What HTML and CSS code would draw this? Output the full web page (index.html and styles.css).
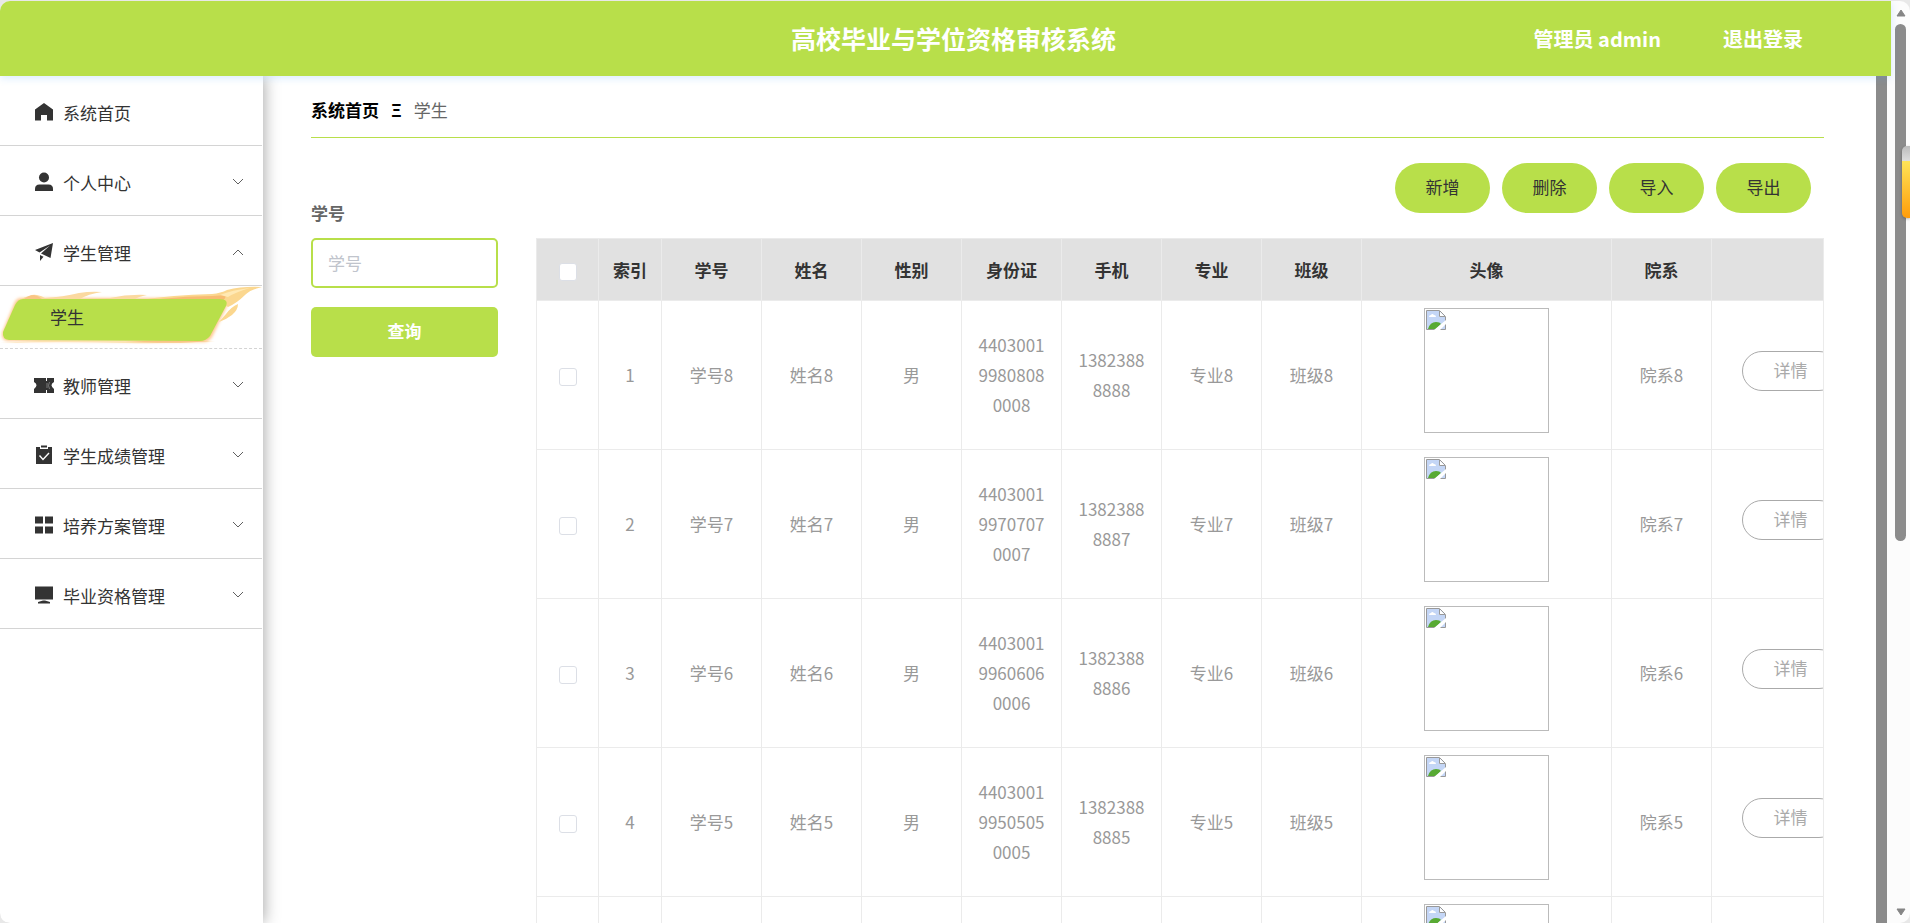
FILE: index.html
```html
<!DOCTYPE html>
<html lang="zh-CN">
<head>
    <meta charset="UTF-8">
    <title>高校毕业与学位资格审核系统</title>
    <link rel="stylesheet" href="styles.css">
</head>
<body>
    <svg class="symbols" aria-hidden="true">
        <symbol id="down" viewBox="0 0 12 8"><path d="M1 1l5 5 5-5" fill="none" stroke="#606060"/></symbol>
        <symbol id="up" viewBox="0 0 12 8"><path d="M1 7l5-5 5 5" fill="none" stroke="#606060"/></symbol>
        <symbol id="broken" viewBox="0 0 20 20">
            <path d="M1 1h12l6 6v12H1z" fill="#c4d6f6"/>
            <path d="M3 7q0-2 2-2 1-2 3 0 2 0 2 2z" fill="#fff"/>
            <path d="M2 19q2-7 8-7 4 0 5 2l-5 5z" fill="#58aa34"/>
            <path d="M13 1v6h6z" fill="#fff"/>
            <path d="M.5 19.500V.5h13l6 6v13zM13.500 1v5.500H19" fill="none" stroke="#999"/>
            <path d="M8 20l12-10v4l-6 6z" fill="#fff"/>
        </symbol>
    </svg>
    <div class="page">
        <div class="app">
            <header class="header">
                <h1 class="title">高校毕业与学位资格审核系统</h1>
                <div class="user">
                    <span>管理员 admin</span>
                    <a href="#">退出登录</a>
                </div>
            </header>
            <div class="body">
                <nav class="sidebar">
                    <a class="item" href="#">
                        <svg class="icon" viewBox="0 0 18 18"><path d="M9 0l9 6.500V17.500h-6V12H6v5.500H0V6.500z"/></svg>
                        <span>系统首页</span>
                    </a>
                    <a class="item" href="#">
                        <svg class="icon" viewBox="0 0 18 18"><circle cx="9" cy="4.500" r="5"/><path d="M0 18v-2q0-4.500 4.500-4.500h9Q18 11.500 18 16v2z"/></svg>
                        <span>个人中心</span>
                        <svg class="arrow"><use href="#down"/></svg>
                    </a>
                    <a class="item" href="#">
                        <svg class="icon" viewBox="0 0 18 18"><path d="M18 0L0 7l4.500 2.500L15 2.500 6 10.500l9.500 4.500zM5 12v6l3.500-4.200z"/></svg>
                        <span>学生管理</span>
                        <svg class="arrow"><use href="#up"/></svg>
                    </a>
                    <a class="sub" href="#">
                        <svg class="flame" viewBox="0 0 262 62">
                            <defs>
                                <filter id="soft" x="-10%" y="-30%" width="120%" height="160%"><feGaussianBlur stdDeviation="1.500"/></filter>
                                <filter id="edge" x="-10%" y="-30%" width="120%" height="160%"><feGaussianBlur stdDeviation=".6"/></filter>
                            </defs>
                            <path d="M21 12h200q8 0 6 8l-15 31q-3 5-9 5L8 55q-7-1-6-8L14 18q2-6 7-6z" fill="#ffc890" filter="url(#soft)"/>
                            <path d="M0 57q60-5 215-2-40 3-90 2-60-2-125 0z" fill="#fde3b4" filter="url(#edge)"/>
                            <path d="M125 56q40-3 85-1-25 3-85 1z" fill="#f9c586" filter="url(#edge)"/>
                            <g filter="url(#edge)">
                                <path d="M20 14q4-3 9-4 4-2 8-1 5 1 8 3 18-1 34-5 12-2 23-1-14 2-22 7l30-1q18-4 37-3-9 2-12 4z" fill="#fbd9a0"/>
                                <path d="M24 13q5-4 10-4 5 1 8 4z" fill="#f9c586"/>
                                <path d="M140 14q32-5 72-6 9-1 15-4 16-4 35-3-12 3-17 8-8 8-17 12l-10-7z" fill="#fbd78f"/>
                                <path d="M160 13q26-3 52-3 8 0 14-2 0 5-4 7z" fill="#f7bb72"/>
                                <path d="M220 9q12-5 30-7-14 4-22 9z" fill="#ffe9b4"/>
                                <path d="M226 28q5-7 12-10 0 6-6 11-5 4-13 7z" fill="#fbd78f"/>
                            </g>
                            <path d="M23 13h196q10 0 7 7l-16 30q-4 5-10 5L9 54q-7-1-6-8l12-27q3-6 8-6z" fill="#b8df4a"/>
                        </svg>
                        <span>学生</span>
                    </a>
                    <a class="item" href="#">
                        <svg class="icon" viewBox="0 0 18 18"><path d="M-1 2h12v3h1V2h7v4q-5 3 0 7v4h-7v-3h-1v3H-1v-4q5-4 0-7z"/><path d="M12 7v5M14.500 6q-2 3.500 0 7" fill="none" stroke="#999" stroke-width=".7"/></svg>
                        <span>教师管理</span>
                        <svg class="arrow"><use href="#down"/></svg>
                    </a>
                    <a class="item" href="#">
                        <svg class="icon" viewBox="0 0 18 18"><path d="M1 1h4v2h8V1h4v17H1zM6-.5h6v2H6z"/><path d="M4.500 9.500l3.500 4 6-6.500" fill="none" stroke="#fff" stroke-width="1.400"/></svg>
                        <span>学生成绩管理</span>
                        <svg class="arrow"><use href="#down"/></svg>
                    </a>
                    <a class="item" href="#">
                        <svg class="icon" viewBox="0 0 18 18"><path d="M0 .5h8v7H0zM10 .5h8v7h-8zM0 10.500h8v7H0zM10 10.500h8v7h-8z"/></svg>
                        <span>培养方案管理</span>
                        <svg class="arrow"><use href="#down"/></svg>
                    </a>
                    <a class="item" href="#">
                        <svg class="icon" viewBox="0 0 18 18"><path d="M0 .5h18v13H0zM8 14.500h2l5 1.500v1.500H3V16z"/></svg>
                        <span>毕业资格管理</span>
                        <svg class="arrow"><use href="#down"/></svg>
                    </a>
                </nav>
                <main class="main">
                    <div class="crumb"><a href="#">系统首页</a><b>Ξ</b><span>学生</span></div>
                    <div class="content">
                        <form class="search">
                            <label for="xuehao">学号</label>
                            <input type="text" id="xuehao" placeholder="学号">
                            <button type="button">查询</button>
                        </form>
                        <div class="list">
                            <div class="btns">
                                <button type="button">新增</button>
                                <button type="button">删除</button>
                                <button type="button">导入</button>
                                <button type="button">导出</button>
                            </div>
                            <div class="tablebox">
                                <table>
                                    <colgroup>
                                        <col class="c-check"><col class="c-index"><col class="c-text"><col class="c-text"><col class="c-text"><col class="c-text"><col class="c-text"><col class="c-text"><col class="c-text"><col class="c-img"><col class="c-text"><col>
                                    </colgroup>
                                    <thead>
                                        <tr>
                                            <th><input type="checkbox" aria-label="全选"></th>
                                            <th>索引</th>
                                            <th>学号</th>
                                            <th>姓名</th>
                                            <th>性别</th>
                                            <th>身份证</th>
                                            <th>手机</th>
                                            <th>专业</th>
                                            <th>班级</th>
                                            <th>头像</th>
                                            <th>院系</th>
                                            <th></th>
                                        </tr>
                                    </thead>
                                    <tbody>
                                        <tr>
                                            <td><input type="checkbox" aria-label="选择1"></td>
                                            <td>1</td>
                                            <td>学号8</td>
                                            <td>姓名8</td>
                                            <td>男</td>
                                            <td>440300199808080008</td>
                                            <td>13823888888</td>
                                            <td>专业8</td>
                                            <td>班级8</td>
                                            <td class="pic"><div><svg><use href="#broken"/></svg></div></td>
                                            <td>院系8</td>
                                            <td class="op"><button type="button">详情</button></td>
                                        </tr>
                                        <tr>
                                            <td><input type="checkbox" aria-label="选择2"></td>
                                            <td>2</td>
                                            <td>学号7</td>
                                            <td>姓名7</td>
                                            <td>男</td>
                                            <td>440300199707070007</td>
                                            <td>13823888887</td>
                                            <td>专业7</td>
                                            <td>班级7</td>
                                            <td class="pic"><div><svg><use href="#broken"/></svg></div></td>
                                            <td>院系7</td>
                                            <td class="op"><button type="button">详情</button></td>
                                        </tr>
                                        <tr>
                                            <td><input type="checkbox" aria-label="选择3"></td>
                                            <td>3</td>
                                            <td>学号6</td>
                                            <td>姓名6</td>
                                            <td>男</td>
                                            <td>440300199606060006</td>
                                            <td>13823888886</td>
                                            <td>专业6</td>
                                            <td>班级6</td>
                                            <td class="pic"><div><svg><use href="#broken"/></svg></div></td>
                                            <td>院系6</td>
                                            <td class="op"><button type="button">详情</button></td>
                                        </tr>
                                        <tr>
                                            <td><input type="checkbox" aria-label="选择4"></td>
                                            <td>4</td>
                                            <td>学号5</td>
                                            <td>姓名5</td>
                                            <td>男</td>
                                            <td>440300199505050005</td>
                                            <td>13823888885</td>
                                            <td>专业5</td>
                                            <td>班级5</td>
                                            <td class="pic"><div><svg><use href="#broken"/></svg></div></td>
                                            <td>院系5</td>
                                            <td class="op"><button type="button">详情</button></td>
                                        </tr>
                                        <tr>
                                            <td></td><td></td><td></td><td></td><td></td><td></td><td></td><td></td><td></td>
                                            <td class="pic"><div><svg><use href="#broken"/></svg></div></td>
                                            <td></td><td></td>
                                        </tr>
                                    </tbody>
                                </table>
                            </div>
                        </div>
                    </div>
                </main>
                <div class="innerbar"></div>
            </div>
        </div>
        <div class="scrollbar">
            <svg viewBox="0 0 10 8"><path d="M5 1l4 6H1z"/></svg>
            <div class="track"><div class="thumb"></div></div>
            <svg viewBox="0 0 10 8"><path d="M5 7l4-6H1z"/></svg>
        </div>
        <div class="float"></div>
    </div>
</body>
</html>
```
FILE: styles.css
```css
*{
    padding: 0;
    margin: 0;
    box-sizing: border-box;
}
body {
    height: 100vh;
    overflow: hidden;
    background: #e8e8e8;
    font-family: "Noto Sans CJK SC", sans-serif;
    font-size: 17px;
    color: #333;
}
a {
    color: inherit;
    text-decoration: none;
}
button, input {
    font: inherit;
}
.symbols {
    display: none;
}
.page {
    position: relative;
    display: flex;
    height: calc(100vh - 1px);
    margin-top: 1px;
    background: #fcfcfc;
    border-radius: 10px;
    overflow: hidden;
}
.app {
    flex: 1;
    display: flex;
    flex-direction: column;
}
.header {
    display: grid;
    grid-template-columns: 1fr auto 1fr;
    align-items: center;
    height: 75px;
    flex: none;
    padding: 0 88px 1px 104px;
    background: #b8df4a;
    color: #fff;
    position: relative;
    z-index: 2;
    box-shadow: 0 2px 8px rgba(64,158,255,0.2);
}
.title {
    grid-column: 2;
    font-size: 25px;
    font-weight: bold;
}
.user {
    display: flex;
    justify-content: flex-end;
    gap: 62px;
    font-size: 20px;
    font-weight: bold;
}
.body {
    flex: 1;
    display: flex;
    min-height: 0;
}
/* 左侧菜单 */
.sidebar {
    width: 263px;
    flex: none;
    padding-right: 1px;
    background: #fff;
    box-shadow: 1px 0 15px rgba(0,0,0,0.35);
    position: relative;
    z-index: 1;
}
.item {
    display: flex;
    align-items: center;
    gap: 10px;
    height: 70px;
    padding: 3px 18px 0 35px;
    border-bottom: 1px solid #d4d4d4;
}
.icon {
    width: 18px;
    height: 18px;
    fill: #333;
    overflow: visible;
}
.arrow {
    width: 12px;
    height: 8px;
    margin-left: auto;
}
.sub {
    display: flex;
    align-items: center;
    height: 63px;
    padding: 0 0 2px 50px;
    border-bottom: 1px dashed #d4d4d4;
    position: relative;
}
.sub span {
    position: relative;
}
.flame {
    position: absolute;
    left: 0;
    top: 0;
    width: 100%;
    height: 62px;
}
/* 右侧内容 */
.main {
    flex: 1;
    min-width: 0;
    padding: 0 52px 0 48px;
    background: #fff;
    overflow: hidden;
}
.crumb {
    display: flex;
    align-items: center;
    gap: 12px;
    height: 62px;
    padding-top: 5px;
    border-bottom: 1px solid #b8df4a;
    color: #666;
}
.crumb a, .crumb b {
    color: #000;
    font-weight: bold;
}
.content {
    display: flex;
    gap: 38px;
    padding-top: 25px;
}
.search {
    display: flex;
    flex-direction: column;
    width: 187px;
    flex: none;
    padding-top: 25px;
}
.search label {
    height: 50px;
    line-height: 50px;
    color: #666;
    font-weight: bold;
}
.search input {
    height: 50px;
    padding: 0 15px 2px;
    border: 2px solid #b8df4a;
    border-radius: 5px;
    background: #fff;
    outline: none;
}
.search input::placeholder {
    color: #c0c4cc;
}
.search button {
    height: 50px;
    margin-top: 19px;
    padding-bottom: 4px;
    border: none;
    border-radius: 5px;
    background: #b8df4a;
    color: #fff;
    font-weight: bold;
}
.list {
    flex: 1;
    min-width: 0;
}
.btns {
    display: flex;
    justify-content: flex-end;
    gap: 12px;
    padding-right: 13px;
    margin-bottom: 25px;
}
.btns button {
    width: 95px;
    height: 50px;
    padding-bottom: 4px;
    border: none;
    border-radius: 25px;
    background: #b8df4a;
    color: #333;
}
.tablebox {
    border: 1px solid #ebebeb;
    border-width: 1px 0 0 1px;
    overflow: hidden;
}
table {
    width: 100%;
    table-layout: fixed;
    border-collapse: separate;
    border-spacing: 0;
}
.c-check {
    width: 62px;
}
.c-index {
    width: 63px;
}
.c-text {
    width: 100px;
}
.c-img {
    width: 250px;
}
th, td {
    padding: 0 13px;
    border-right: 1px solid #ebebeb;
    border-bottom: 1px solid #ebebeb;
    line-height: 30px;
    text-align: center;
    word-break: break-all;
}
th {
    height: 62px;
    padding: 0 5px;
    background: #e1e1e1;
    font-weight: bold;
}
td {
    height: 149px;
    color: #999;
}
th input, td input {
    appearance: none;
    display: inline-block;
    width: 18px;
    height: 18px;
    border: 1px solid #dcdfe6;
    border-radius: 3px;
    background: #fff;
    vertical-align: middle;
}
.pic {
    padding-top: 7px;
    vertical-align: top;
}
.pic div {
    width: 125px;
    height: 125px;
    margin: 0 auto;
    padding: 1px;
    border: 1px solid #bbb;
}
.pic svg {
    display: block;
    width: 20px;
    height: 20px;
}
.op {
    padding: 0 0 9px 30px;
    overflow: hidden;
    text-align: left;
    white-space: nowrap;
}
.op button {
    width: 97px;
    height: 40px;
    padding-bottom: 2px;
    border: 1px solid #aaa;
    border-radius: 20px;
    background: #fff;
    color: #aaa;
    vertical-align: middle;
}
/* 滚动条 */
.innerbar {
    width: 11px;
    flex: none;
    margin-right: 4px;
    background: #8b8b8b;
}
.scrollbar {
    display: flex;
    flex-direction: column;
    align-items: center;
    gap: 7px;
    width: 19px;
    flex: none;
    padding: 8px 0 7px;
}
.scrollbar svg {
    width: 10px;
    height: 8px;
    flex: none;
    fill: #858585;
    stroke: #858585;
    stroke-linejoin: round;
}
.track {
    flex: 1;
    width: 11px;
}
.thumb {
    height: 59%;
    border-radius: 6px;
    background: #8b8b8b;
}
/* 右侧悬浮块 */
.float {
    position: absolute;
    right: 0;
    top: 145px;
    width: 8px;
    height: 72px;
    border-radius: 5px 0 0 5px;
    background: linear-gradient(#bbb, #ddd 15px, #ffe458 15px, #ff9c0a);
    box-shadow: 0 1px 3px rgba(0,0,0,0.3);
}
```
